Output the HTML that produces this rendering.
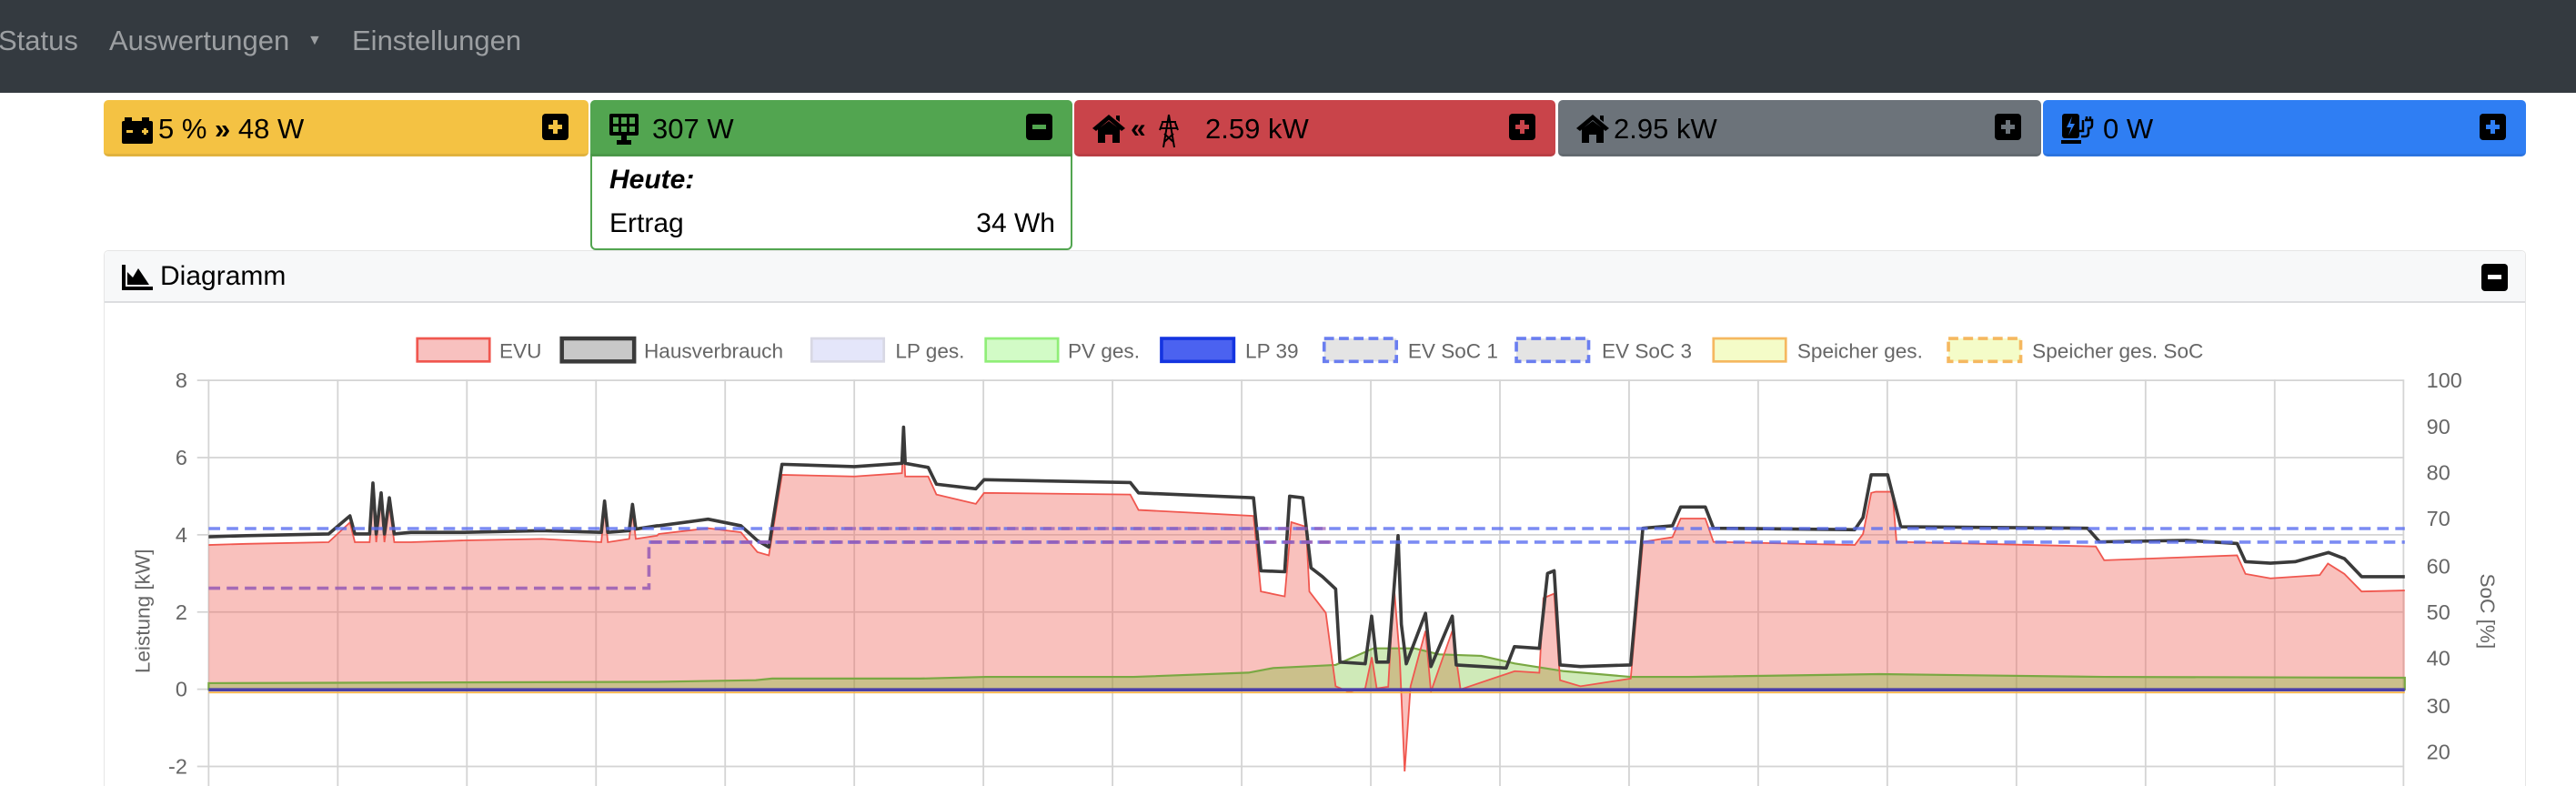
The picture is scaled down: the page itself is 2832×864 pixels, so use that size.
<!DOCTYPE html>
<html><head><meta charset="utf-8"><style>
*{box-sizing:border-box;margin:0;padding:0}
html,body{width:2832px;height:864px;overflow:hidden}
body{background:#fff;font-family:"Liberation Sans",sans-serif;position:relative}
.nav{position:absolute;left:0;top:0;width:2832px;height:102px;background:#343a40}
.nav span{position:absolute;top:27px;font-size:31px;color:#9c9fa2}
.card{position:absolute;top:110px;height:62px;border-radius:5px;border-bottom:3px solid rgba(0,0,0,.08)}
.card .t{position:absolute;left:60px;top:14px;font-size:31px;color:#000}
.btn{position:absolute;right:22px;top:15px;width:29px;height:29px;background:#000;border-radius:4px}
.btn i{position:absolute;left:7px;top:12px;width:15px;height:5px}
.btn b{position:absolute;left:12px;top:7px;width:5px;height:15px}
.ic{position:absolute;left:20px;top:14px}
</style></head><body>
<div class="nav"><span style="left:-2px">Status</span><span style="left:120px">Auswertungen</span><span style="left:338px;top:36px;font-size:16px">▼</span><span style="left:387px">Einstellungen</span></div>

<div class="card" style="left:114px;width:533px;background:#f4c243"><svg class="ic" width="36" height="34" viewBox="0 0 36 34"><rect x="3" y="5" width="8" height="5" fill="#000"/><rect x="22" y="5" width="8" height="5" fill="#000"/><rect x="0" y="9" width="34" height="25" rx="2" fill="#000"/><rect x="5" y="19" width="7" height="3" fill="#f4c243"/><rect x="22" y="19" width="7" height="3" fill="#f4c243"/><rect x="24" y="17" width="3" height="7" fill="#f4c243"/></svg><div class="t">5 % <b>»</b> 48 W</div><div class="btn"><i style="background:#f4c243"></i><b style="background:#f4c243"></b></div></div>

<div style="position:absolute;left:649px;top:110px;width:530px;height:165px;border:2px solid #52a550;border-radius:6px;background:#fff"></div>
<div class="card" style="left:649px;width:530px;background:#52a550;border-radius:5px 5px 0 0"><svg class="ic" width="36" height="36" viewBox="0 0 36 36"><rect x="1" y="1" width="32" height="24" rx="2" fill="#000"/><g fill="#52a550"><rect x="5" y="5" width="6" height="7"/><rect x="14" y="5" width="6" height="7"/><rect x="23" y="5" width="6" height="7"/><rect x="5" y="15" width="6" height="6"/><rect x="14" y="15" width="6" height="6"/><rect x="23" y="15" width="6" height="6"/></g><rect x="14" y="25" width="6" height="5" fill="#000"/><rect x="9" y="30" width="16" height="5" fill="#000"/></svg><div class="t" style="left:68px">307 W</div><div class="btn"><i style="background:#52a550"></i></div></div>
<div style="position:absolute;left:670px;top:181px;font-size:30px;font-weight:bold;font-style:italic">Heute:</div>
<div style="position:absolute;left:670px;top:229px;font-size:30px">Ertrag</div>
<div style="position:absolute;left:1000px;width:160px;text-align:right;top:229px;font-size:30px">34 Wh</div>

<div class="card" style="left:1181px;width:529px;background:#c9444a"><svg class="ic" width="130" height="40" viewBox="0 0 130 40"><path d="M0 17 L18 2 L36 17 L32 20 L18 8 L4 20Z M6 18 L18 9 L30 18 V33 H22 V24 H14 V33 H6Z M26 3 H30 V10 L26 7Z" fill="#000"/><text x="42" y="27" font-size="30" font-family="Liberation Sans" font-weight="bold">«</text><path d="M84 2 L78 38 M84 2 L90 38 M76 10 H92 M74 17 H94 M79 23 L89 32 M89 23 L79 32 M77 11 L74 19 M91 11 L94 19" stroke="#000" stroke-width="2" fill="none"/></svg><div class="t" style="left:144px">2.59 kW</div><div class="btn"><i style="background:#c9444a"></i><b style="background:#c9444a"></b></div></div>

<div class="card" style="left:1713px;width:531px;background:#6c737a"><svg class="ic" width="38" height="34" viewBox="0 0 38 34"><path d="M0 17 L18 2 L36 17 L32 20 L18 8 L4 20Z M6 18 L18 9 L30 18 V33 H22 V24 H14 V33 H6Z M26 3 H30 V10 L26 7Z" fill="#000"/></svg><div class="t" style="left:61px">2.95 kW</div><div class="btn"><i style="background:#6c737a"></i><b style="background:#6c737a"></b></div></div>

<div class="card" style="left:2246px;width:531px;background:#2f7ef3"><svg class="ic" width="40" height="36" viewBox="0 0 40 36"><rect x="1" y="1" width="19" height="27" rx="3" fill="#000"/><path d="M12 4 L6 16 H11 L8 25 L15 12 H10Z" fill="#2f7ef3"/><rect x="0" y="30" width="22" height="4" fill="#000"/><path d="M20 20 H24 V8 M28 4 V8 M32 4 V8 M26 8 H34 V13 Q34 17 30 17 V22 Q30 26 26 26 H22" stroke="#000" stroke-width="2.5" fill="none"/></svg><div class="t" style="left:66px">0 W</div><div class="btn"><i style="background:#2f7ef3"></i><b style="background:#2f7ef3"></b></div></div>

<div style="position:absolute;left:114px;top:275px;width:2663px;height:589px;border:1px solid #e6e6e6;border-bottom:none;border-radius:5px 5px 0 0;background:#fff"></div>
<div style="position:absolute;left:115px;top:276px;width:2661px;height:57px;background:#f7f8f9;border-bottom:2px solid #dcdde0;border-radius:5px 5px 0 0"></div>
<svg style="position:absolute;left:134px;top:291px" width="34" height="28" viewBox="0 0 34 28"><path d="M0 0 H4 V24 H34 V28 H0Z M6 22 V8 L12 14 L18 4 L30 22Z" fill="#000"/></svg>
<div style="position:absolute;left:176px;top:287px;font-size:30px">Diagramm</div>
<div class="btn" style="left:2728px;top:290px;right:auto;width:29px;height:30px"><i style="background:#fff"></i></div>

<svg style="position:absolute;left:0;top:0" width="2832" height="864" viewBox="0 0 1568 478.4" preserveAspectRatio="none" font-family="Liberation Sans">
<g stroke="#d4d4d4" stroke-width="1">
<path d="M120 231.5H1463 M120 278.5H1463 M120 325.5H1463 M120 372.5H1463 M120 419.5H1463 M120 466.5H1463"/>
<path d="M127 231V478.4 M205.6 231V478.4 M284.2 231V478.4 M362.8 231V478.4 M441.4 231V478.4 M520 231V478.4 M598.6 231V478.4 M677.2 231V478.4 M755.8 231V478.4 M834.4 231V478.4 M913 231V478.4 M991.6 231V478.4 M1070.2 231V478.4 M1148.8 231V478.4 M1227.4 231V478.4 M1306 231V478.4 M1384.6 231V478.4 M1463 231V478.4"/>
</g>
<g fill="#666" font-size="13" text-anchor="end"><text x="114" y="236">8</text><text x="114" y="283">6</text><text x="114" y="330">4</text><text x="114" y="377">2</text><text x="114" y="424">0</text><text x="114" y="471">-2</text></g>
<g fill="#666" font-size="13"><text x="1477" y="236">100</text><text x="1477" y="264">90</text><text x="1477" y="292">80</text><text x="1477" y="320">70</text><text x="1477" y="349">60</text><text x="1477" y="377">50</text><text x="1477" y="405">40</text><text x="1477" y="434">30</text><text x="1477" y="462">20</text></g>
<text transform="translate(91 372) rotate(-90)" text-anchor="middle" fill="#666" font-size="12.5">Leistung [kW]</text>
<text transform="translate(1510 372) rotate(90)" text-anchor="middle" fill="#666" font-size="12.5">SoC [%]</text>

<polygon fill="rgba(240,100,90,0.4)" points="127,331.7 150,331 200,330 213,318 216,330 225,330 227,300 229,330 232,305 234,330 237,308 240,330 250,330 283,328.9 330,328 366,330 368,310 370,330 383,328 385,312 387,328 400,326 401,325 431,321.5 451,324 461,336 468,338 476,289 520,290 549,288 550,268 551,290 565,290 570,301 594,306.7 599,300 688,301 693,310.4 763,314 767.5,360 782,363 786,317.8 795,320.6 797,360 807,373 813,417.7 820.7,421 831,419 835,400 838,419 845,418 848.5,356.6 852,400 855,469.5 858.6,417.7 867.7,384 871,421 884,384 889,419.6 922,408.5 937,409.5 939.5,364 946,361.3 949.6,414 962,417.7 992.6,413 1000,329.8 1018,327 1023,315.6 1038,315.6 1043,329.8 1129,331.7 1134,325 1139,300 1141.8,299.3 1151.9,299.3 1154.4,329.8 1275.7,332.6 1280.8,341 1361.7,338 1366.8,349.3 1382,352 1412,350 1417,343 1427,349.3 1437.5,360 1463.8,359.4 1463.8,419.6 127,419.6"/>
<polygon fill="rgba(110,190,40,0.33)" stroke="#7aa843" stroke-width="1.2" points="127,415.8 400,415 460,414 470,413 560,413 600,412 690,412 760,409.4 775,406.6 813,404.7 836,394.6 861,394.6 876,398.3 901.6,399.2 922,403.8 952,408.5 992.6,412 1028,412 1144,410.3 1280.8,412 1463.8,412.5 1463.8,419.6 127,419.6"/>
<polyline fill="none" stroke="#f0574f" stroke-width="1" points="127,331.7 150,331 200,330 213,318 216,330 225,330 227,300 229,330 232,305 234,330 237,308 240,330 250,330 283,328.9 330,328 366,330 368,310 370,330 383,328 385,312 387,328 400,326 401,325 431,321.5 451,324 461,336 468,338 476,289 520,290 549,288 550,268 551,290 565,290 570,301 594,306.7 599,300 688,301 693,310.4 763,314 767.5,360 782,363 786,317.8 795,320.6 797,360 807,373 813,417.7 820.7,421 831,419 835,400 838,419 845,418 848.5,356.6 852,400 855,469.5 858.6,417.7 867.7,384 871,421 884,384 889,419.6 922,408.5 937,409.5 939.5,364 946,361.3 949.6,414 962,417.7 992.6,413 1000,329.8 1018,327 1023,315.6 1038,315.6 1043,329.8 1129,331.7 1134,325 1139,300 1141.8,299.3 1151.9,299.3 1154.4,329.8 1275.7,332.6 1280.8,341 1361.7,338 1366.8,349.3 1382,352 1412,350 1417,343 1427,349.3 1437.5,360 1463.8,359.4"/>
<path d="M127 421.5H1463.8" stroke="#f5b042" stroke-width="1"/>
<path d="M127 419.8H1463.8" stroke="#4a3fa8" stroke-width="2"/>
<polyline fill="none" stroke="#3a3a3a" stroke-width="2" stroke-linejoin="round" points="127,326.7 150,326 200,325 213,314 216,325 225,325 227,294 229,325 232,300 234,325 237,303 240,325 250,324 283,324 330,323 366,324 368,305 370,324 383,323 385,307 387,322 400,320 401,320 431,316 451,320 461,329 468,333 476,282.6 520,284 549,282 550,260 551,282 565,284.5 570,294.7 594,297.5 599,292 688,293.7 693,300 763,303 767.5,347.4 782,348 785,302 793,303 798,345.6 805,351 813,358.5 815.6,403 831,404 834.9,375 838,403 845,403 848.5,358.5 851,326 853,380 856,404 867.7,373.3 871,405.7 884,375 886.4,404.7 916.8,406.6 921.8,393.6 937,394.6 942,349 946,347.4 949.6,404.7 962,405.7 992.6,404.7 1000,321.5 1018,320 1023,308.6 1038,308.6 1043,321.5 1129,322.4 1134,315 1139,289 1149,289 1157,320.6 1270.7,321.5 1278,329.8 1331,328.9 1361.7,330.8 1366.8,341.9 1382,342.8 1397,341.9 1417.3,336.3 1427,340 1437.5,351 1463.8,351"/>
<g fill="none" stroke-width="2" stroke-dasharray="7,4">
<path d="M127 321.7H1463.8" stroke="rgba(90,110,240,0.8)"/>
<path d="M395 330H1463.8" stroke="rgba(90,110,240,0.8)"/>
<path d="M127 358H395V330H810" stroke="rgba(150,90,180,0.85)"/>
<path d="M470 321.7H810" stroke="rgba(150,90,180,0.7)"/>
</g>

<g font-size="12.5" fill="#666">
<rect x="254" y="206" width="44" height="14" fill="#f8c1bf" stroke="#f0574f" stroke-width="1.5"/><text x="304" y="218">EVU</text>
<rect x="342" y="206" width="44" height="14" fill="#c8c8c8" stroke="#3a3a3a" stroke-width="2.5"/><text x="392" y="218">Hausverbrauch</text>
<rect x="494" y="206" width="44" height="14" fill="#e4e6fa" stroke="#d8d8e4" stroke-width="1.5"/><text x="545" y="218">LP ges.</text>
<rect x="600" y="206" width="44" height="14" fill="#d2fbc6" stroke="#90ee78" stroke-width="1.5"/><text x="650" y="218">PV ges.</text>
<rect x="707" y="206" width="44" height="14" fill="#4b62f0" stroke="#1434e0" stroke-width="2"/><text x="758" y="218">LP 39</text>
<rect x="806" y="206" width="44" height="14" fill="#e4e4e4" stroke="#6a7ef0" stroke-width="2" stroke-dasharray="6,3"/><text x="857" y="218">EV SoC 1</text>
<rect x="923" y="206" width="44" height="14" fill="#e4e4e4" stroke="#6a7ef0" stroke-width="2" stroke-dasharray="6,3"/><text x="975" y="218">EV SoC 3</text>
<rect x="1043" y="206" width="44" height="14" fill="#f4fcc8" stroke="#f5b860" stroke-width="1.5"/><text x="1094" y="218">Speicher ges.</text>
<rect x="1186" y="206" width="44" height="14" fill="#f4fcc8" stroke="#f5b860" stroke-width="2" stroke-dasharray="6,3"/><text x="1237" y="218">Speicher ges. SoC</text>
</g>
</svg>
</body></html>
